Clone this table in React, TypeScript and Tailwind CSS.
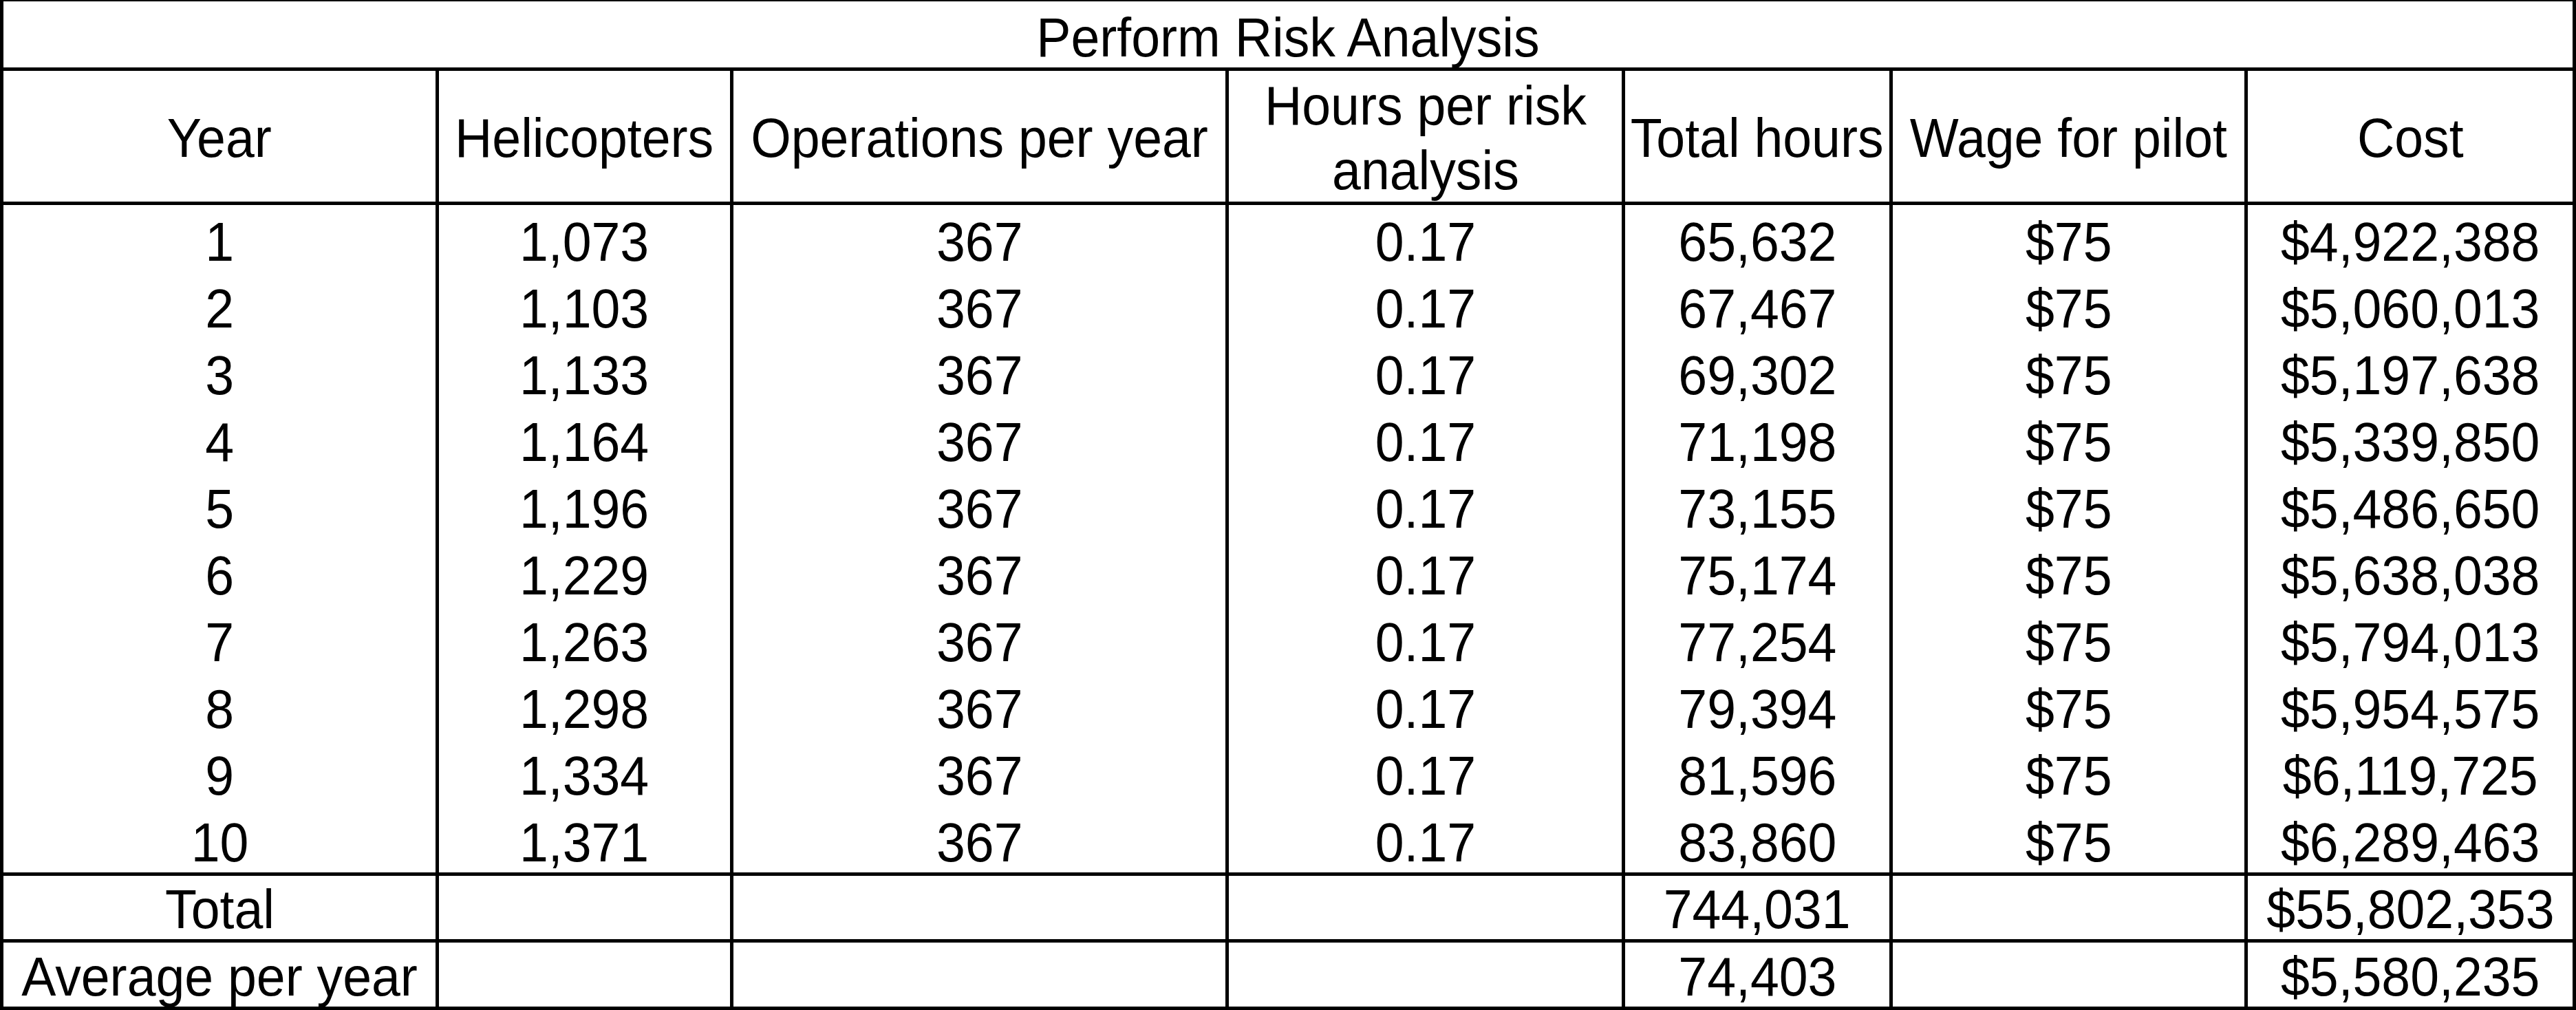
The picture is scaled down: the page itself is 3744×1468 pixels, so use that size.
import React from "react";

const widths = ["w-[633px]", "w-[428px]", "w-[720px]", "w-[576px]", "w-[389px]", "w-[516px]", "w-[472px]"];

const rows: string[][] = [
  ["1", "1,073", "367", "0.17", "65,632", "$75", "$4,922,388"],
  ["2", "1,103", "367", "0.17", "67,467", "$75", "$5,060,013"],
  ["3", "1,133", "367", "0.17", "69,302", "$75", "$5,197,638"],
  ["4", "1,164", "367", "0.17", "71,198", "$75", "$5,339,850"],
  ["5", "1,196", "367", "0.17", "73,155", "$75", "$5,486,650"],
  ["6", "1,229", "367", "0.17", "75,174", "$75", "$5,638,038"],
  ["7", "1,263", "367", "0.17", "77,254", "$75", "$5,794,013"],
  ["8", "1,298", "367", "0.17", "79,394", "$75", "$5,954,575"],
  ["9", "1,334", "367", "0.17", "81,596", "$75", "$6,119,725"],
  ["10", "1,371", "367", "0.17", "83,860", "$75", "$6,289,463"],
];

function T({ children }: { children: React.ReactNode }) {
  return <span className="inline-block whitespace-nowrap scale-x-[0.94] text-center">{children}</span>;
}

function Row({ cells, h, header = false }: { cells: React.ReactNode[]; h: string; header?: boolean }) {
  return (
    <div className={`flex ${h}`}>
      {cells.map((c, i) => (
        <div
          key={i}
          className={`${widths[i]} shrink-0 flex justify-center ${
            header ? "items-center pt-[6px] leading-[94px]" : "items-end leading-[87px]"
          } ${i < 6 ? "border-r-[5px] border-black" : ""}`}
        >
          <T>{c}</T>
        </div>
      ))}
    </div>
  );
}

export default function App() {
  return (
    <div className="w-[3744px] h-[1468px] bg-white text-black border-t-2 border-x-[5px] border-b-[5px] border-black flex flex-col font-['Liberation_Sans',Arial,sans-serif] text-[80px] overflow-hidden">
      <div className="h-[101px] shrink-0 border-b-[5px] border-black flex items-end justify-center leading-[87px]">
        <T>Perform Risk Analysis</T>
      </div>
      <div className="shrink-0 border-b-[5px] border-black">
        <Row
          h="h-[190px]"
          header
          cells={[
            "Year",
            "Helicopters",
            "Operations per year",
            <>
              Hours per risk
              <br />
              analysis
            </>,
            "Total hours",
            "Wage for pilot",
            "Cost",
          ]}
        />
      </div>
      <div className="shrink-0 border-b-[5px] border-black">
        {rows.map((r, i) => (
          <Row key={i} h="h-[97px]" cells={r} />
        ))}
      </div>
      <div className="shrink-0 border-b-[5px] border-black">
        <Row h="h-[92px]" cells={["Total", "", "", "", "744,031", "", "$55,802,353"]} />
      </div>
      <div className="shrink-0">
        <Row h="h-[93px]" cells={["Average per year", "", "", "", "74,403", "", "$5,580,235"]} />
      </div>
    </div>
  );
}
